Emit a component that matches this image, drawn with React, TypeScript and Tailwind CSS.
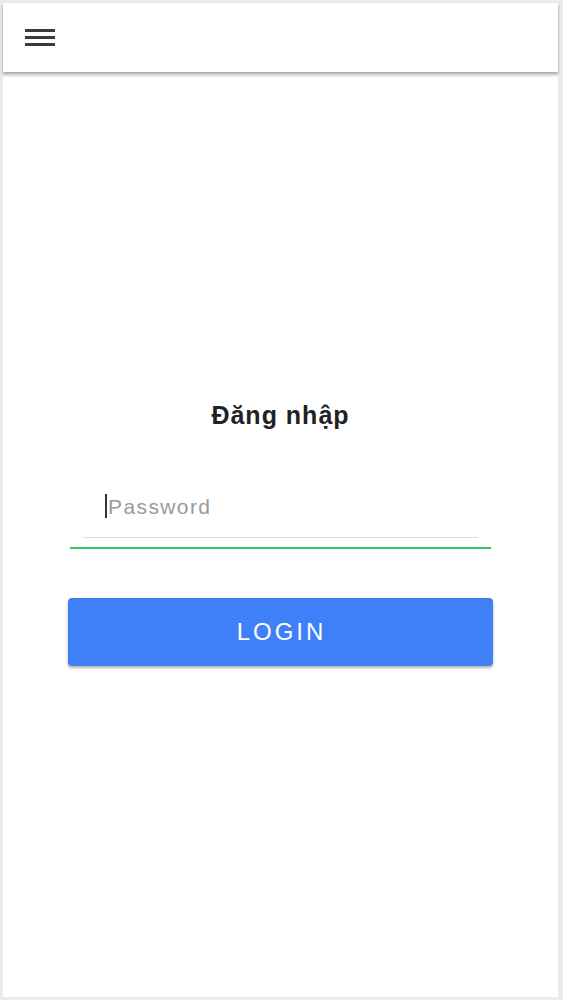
import React from "react";

export default function App() {
  return (
    <div
      className="h-[1000px] w-[563px] bg-[#ebebeb] pt-[3px] pl-[3px] pr-[5px] pb-[3px] flex"
      style={{ fontFamily: '"Liberation Sans", Arial, sans-serif' }}
    >
      <div className="flex-1 bg-white flex flex-col">
        <header className="h-[69px] shrink-0 bg-white flex items-center pl-[22px] shadow-[0_2px_3px_rgba(0,0,0,0.35)] relative z-10">
          <div className="flex flex-col gap-[4px] w-[30px]">
            <span className="block h-[3px] bg-[#3a3a3a]" />
            <span className="block h-[3px] bg-[#3a3a3a]" />
            <span className="block h-[3px] bg-[#3a3a3a]" />
          </div>
        </header>
        <div className="h-[5px] bg-[#f3f3f3] shrink-0" />
        <main className="flex-1 flex flex-col items-center pt-[326px]">
          <h1 className="text-[25px] font-bold text-[#222] leading-none tracking-[1px]">
            Đăng nhập
          </h1>
          <div className="w-[423px] mt-[66px] flex flex-col items-center">
            <div className="w-[395px] border-b border-[#dddddd] pb-[19px] flex items-center pl-[22px]">
              <span className="w-[2px] h-[24px] bg-[#333] mr-[1px]" />
              <span className="text-[21px] text-[#9a9a9a] leading-none tracking-[1.4px]">
                Password
              </span>
            </div>
            <div className="w-[421px] h-[2px] bg-[#2ecc5f] mt-[9px]" />
          </div>
          <button className="mt-[49px] w-[425px] h-[68px] rounded-[4px] bg-[#3f80f9] text-white text-[24px] tracking-[3px] shadow-[0_2px_3px_rgba(0,0,0,0.3)] flex items-center justify-center pl-[2px]">
            LOGIN
          </button>
        </main>
      </div>
    </div>
  );
}
